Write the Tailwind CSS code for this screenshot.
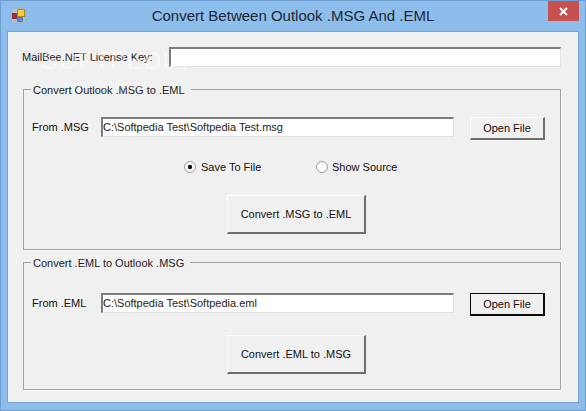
<!DOCTYPE html>
<html>
<head>
<meta charset="utf-8">
<script src="https://cdn.jsdelivr.net/npm/@tailwindcss/browser@4"></script>
</head>
<body class="m-0 overflow-hidden bg-[#8dbdeb]">
<div class="relative flex flex-col w-[586px] h-[411px] bg-[#8dbdeb] border border-[#6f9fd0] font-['Liberation_Sans',Arial,sans-serif] text-[11px] text-[#111] overflow-hidden">
  <!-- title bar -->
  <div class="relative flex items-center justify-center h-[30px] shrink-0 text-[15px] text-[#1c2733]">
    <svg class="absolute left-[10px] top-[7px]" width="15" height="15" viewBox="0 0 15 15">
      <rect x="0.5" y="0.5" width="14" height="14" fill="#a9c3dd" stroke="#a3b3c2"/>
      <rect x="1.5" y="5.5" width="4" height="5" fill="#c81e1e" stroke="#7a1010" stroke-width="0.6"/>
      <rect x="6.5" y="1.5" width="7" height="7" fill="#f6cf3c" stroke="#b08a1e"/>
      <rect x="6.5" y="9.5" width="5" height="4" fill="#5c86e0" stroke="#3a5cb0" stroke-width="0.6"/>
    </svg>
    <span>Convert Between Outlook .MSG And .EML</span>
    <div class="absolute right-[6px] top-0 flex items-center justify-center w-[31px] h-[20px] bg-[#c75050]">
      <svg width="9" height="9" viewBox="0 0 9 9"><path d="M1 1L8 8M8 1L1 8" stroke="#fff" stroke-width="2"/></svg>
    </div>
  </div>
  <!-- client area -->
  <div class="relative flex flex-col flex-1 mx-[6px] mb-[7px] px-[15px] bg-[#f0f0f0] border border-[#7aa5d2]">
    <div class="flex items-center h-[20px] mt-[15px] shrink-0 ml-[-1px]">
      <span class="w-[147px] shrink-0 text-[#222]">MailBee.NET License Key:</span>
      <div class="w-[392px] h-[20px] bg-white border border-[#e3e3e3] border-t-2 border-l-2 border-t-[#7d7d7d] border-l-[#7d7d7d]"></div>
    </div>
    <!-- group 1 -->
    <div class="relative mt-[22px] w-[538px] h-[161px] shrink-0 border border-[#a0a0a0] shadow-[1px_1px_0_#fff]">
      <span class="absolute left-[7px] top-[-7px] pl-[2px] pr-[6px] bg-[#f0f0f0] leading-[14px] text-[#222]">Convert Outlook .MSG to .EML</span>
      <div class="flex items-start mt-[27px] h-[22px] pl-[8px]">
        <span class="w-[69px] leading-[20px]">From .MSG</span>
        <div class="flex items-center w-[353px] h-[20px] bg-white border border-[#e3e3e3] border-t-2 border-l-2 border-t-[#7d7d7d] border-l-[#7d7d7d] text-[#222]">C:\Softpedia Test\Softpedia Test.msg</div>
        <button class="w-[75px] h-[23px] ml-[16px] bg-[#f0f0f0] border border-[#fff] border-r-2 border-b-2 border-r-[#6e6e6e] border-b-[#6e6e6e]">Open File</button>
      </div>
      <div class="flex items-center mt-[20px] h-[16px] pl-[160px]">
        <svg width="12" height="12" viewBox="0 0 12 12"><circle cx="6" cy="6" r="5.5" fill="#fff" stroke="#9a9a9a"/><circle cx="6" cy="6" r="2.2" fill="#111"/></svg>
        <span class="ml-[5px] w-[115px]">Save To File</span>
        <svg width="12" height="12" viewBox="0 0 12 12"><circle cx="6" cy="6" r="5.5" fill="#fff" stroke="#9a9a9a"/></svg>
        <span class="ml-[4px]">Show Source</span>
      </div>
      <div class="flex mt-[20px] pl-[203px]">
        <button class="w-[139px] h-[39px] bg-[#f0f0f0] border border-[#fff] border-r-2 border-b-2 border-r-[#6e6e6e] border-b-[#6e6e6e]">Convert .MSG to .EML</button>
      </div>
    </div>
    <!-- group 2 -->
    <div class="relative mt-[12px] w-[538px] h-[128px] shrink-0 border border-[#a0a0a0] shadow-[1px_1px_0_#fff]">
      <span class="absolute left-[7px] top-[-7px] pl-[2px] pr-[6px] bg-[#f0f0f0] leading-[14px] text-[#222]">Convert .EML to Outlook .MSG</span>
      <div class="flex items-start mt-[30px] h-[22px] pl-[8px]">
        <span class="w-[69px] leading-[20px]">From .EML</span>
        <div class="flex items-center w-[353px] h-[20px] bg-white border border-[#e3e3e3] border-t-2 border-l-2 border-t-[#7d7d7d] border-l-[#7d7d7d] text-[#222]">C:\Softpedia Test\Softpedia.eml</div>
        <button class="w-[75px] h-[23px] ml-[16px] bg-[#f0f0f0] border-2 border-[#0a0a0a] border-t border-l">Open File</button>
      </div>
      <div class="flex mt-[20px] pl-[203px]">
        <button class="w-[139px] h-[39px] bg-[#f0f0f0] border border-[#fff] border-r-2 border-b-2 border-r-[#6e6e6e] border-b-[#6e6e6e]">Convert .EML to .MSG</button>
      </div>
    </div>
  </div>
  <!-- watermark -->
  <div class="absolute left-[41px] top-[47px] text-[24px] leading-[26px] tracking-[1px] text-white/50 pointer-events-none">SOFTPEDIA</div>
  <div class="absolute left-[62px] top-[78px] text-[10px] leading-[12px] text-white/50 pointer-events-none">www.softpedia.com</div>
</div>
</body>
</html>
